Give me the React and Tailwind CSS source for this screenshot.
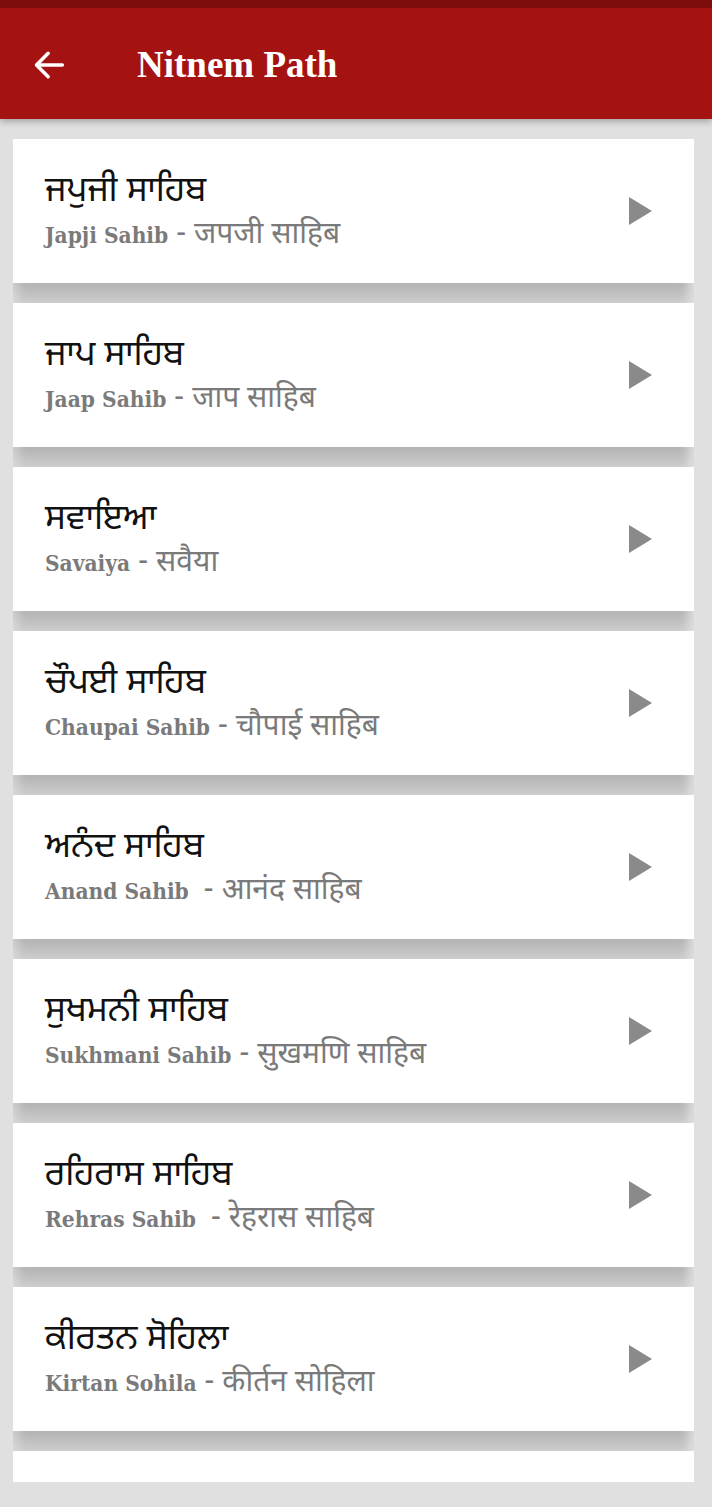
import React from "react";

const items = [
  { pa: "ਜਪੁਜੀ ਸਾਹਿਬ", en: "Japji Sahib", hi: "जपजी साहिब" },
  { pa: "ਜਾਪ ਸਾਹਿਬ", en: "Jaap Sahib", hi: "जाप साहिब" },
  { pa: "ਸਵਾਇਆ", en: "Savaiya", hi: "सवैया" },
  { pa: "ਚੌਪਈ ਸਾਹਿਬ", en: "Chaupai Sahib", hi: "चौपाई साहिब" },
  { pa: "ਅਨੰਦ ਸਾਹਿਬ", en: "Anand Sahib ", hi: "आनंद साहिब" },
  { pa: "ਸੁਖਮਨੀ ਸਾਹਿਬ", en: "Sukhmani Sahib", hi: "सुखमणि साहिब" },
  { pa: "ਰਹਿਰਾਸ ਸਾਹਿਬ", en: "Rehras Sahib ", hi: "रेहरास साहिब" },
  { pa: "ਕੀਰਤਨ ਸੋਹਿਲਾ", en: "Kirtan Sohila", hi: "कीर्तन सोहिला" },
];

function Band() {
  return (
    <div className="h-[20px] bg-gradient-to-b from-[#b3b3b3] to-[#cdcdcd] shadow-[inset_-14px_0_10px_-8px_rgba(224,224,224,0.9),inset_14px_0_10px_-8px_rgba(224,224,224,0.6)]" />
  );
}

export default function App() {
  return (
    <div className="w-[712px] h-[1507px] overflow-hidden bg-[#e0e0e0] flex flex-col">
      <header className="relative shrink-0 h-[119px] bg-[#a51212] shadow-[0_3px_6px_rgba(0,0,0,0.25)]">
        <div className="h-[8px] bg-[#7c0c0c]" />
        <div className="flex items-center h-[111px] pt-[2px]">
          <svg className="ml-[29px] w-[40px] h-[40px]" viewBox="0 0 24 24" fill="none" stroke="white" strokeWidth="2.1" strokeLinecap="round" strokeLinejoin="round">
            <path d="M20 12H5" />
            <path d="M11.5 5l-7 7 7 7" />
          </svg>
          <h1 className="ml-[68px] text-white text-[37px] font-bold" style={{ fontFamily: '"Liberation Serif", "DejaVu Serif", serif' }}>
            Nitnem Path
          </h1>
        </div>
      </header>
      <main className="pl-[13px] pr-[18px] pt-[20px] flex flex-col">
        {items.map((it, i) => (
          <div key={i}>
            <div className="h-[144px] bg-white flex items-center pl-[32px] pr-[42px]">
              <div className="flex-1 flex flex-col pt-[4px]">
                <div className="text-[35px] leading-[44px] text-[#111]" style={{ fontFamily: '"Noto Sans Gurmukhi", "Noto Sans", sans-serif' }}>
                  {it.pa}
                </div>
                <div className="leading-[40px] text-[#7a7a7a] whitespace-pre flex items-baseline">
                  <span className="font-bold text-[22.5px]" style={{ fontFamily: '"DejaVu Serif Condensed", "DejaVu Serif", serif' }}>{it.en}</span>
                  <span className="text-[30px]" style={{ fontFamily: '"Noto Sans Devanagari", "Noto Sans", sans-serif' }}> - {it.hi}</span>
                </div>
              </div>
              <div className="w-0 h-0 border-y-[14px] border-y-transparent border-l-[23px] border-l-[#8a8a8a]" />
            </div>
            <Band />
          </div>
        ))}
        <div className="h-[31px] bg-white" />
      </main>
    </div>
  );
}
